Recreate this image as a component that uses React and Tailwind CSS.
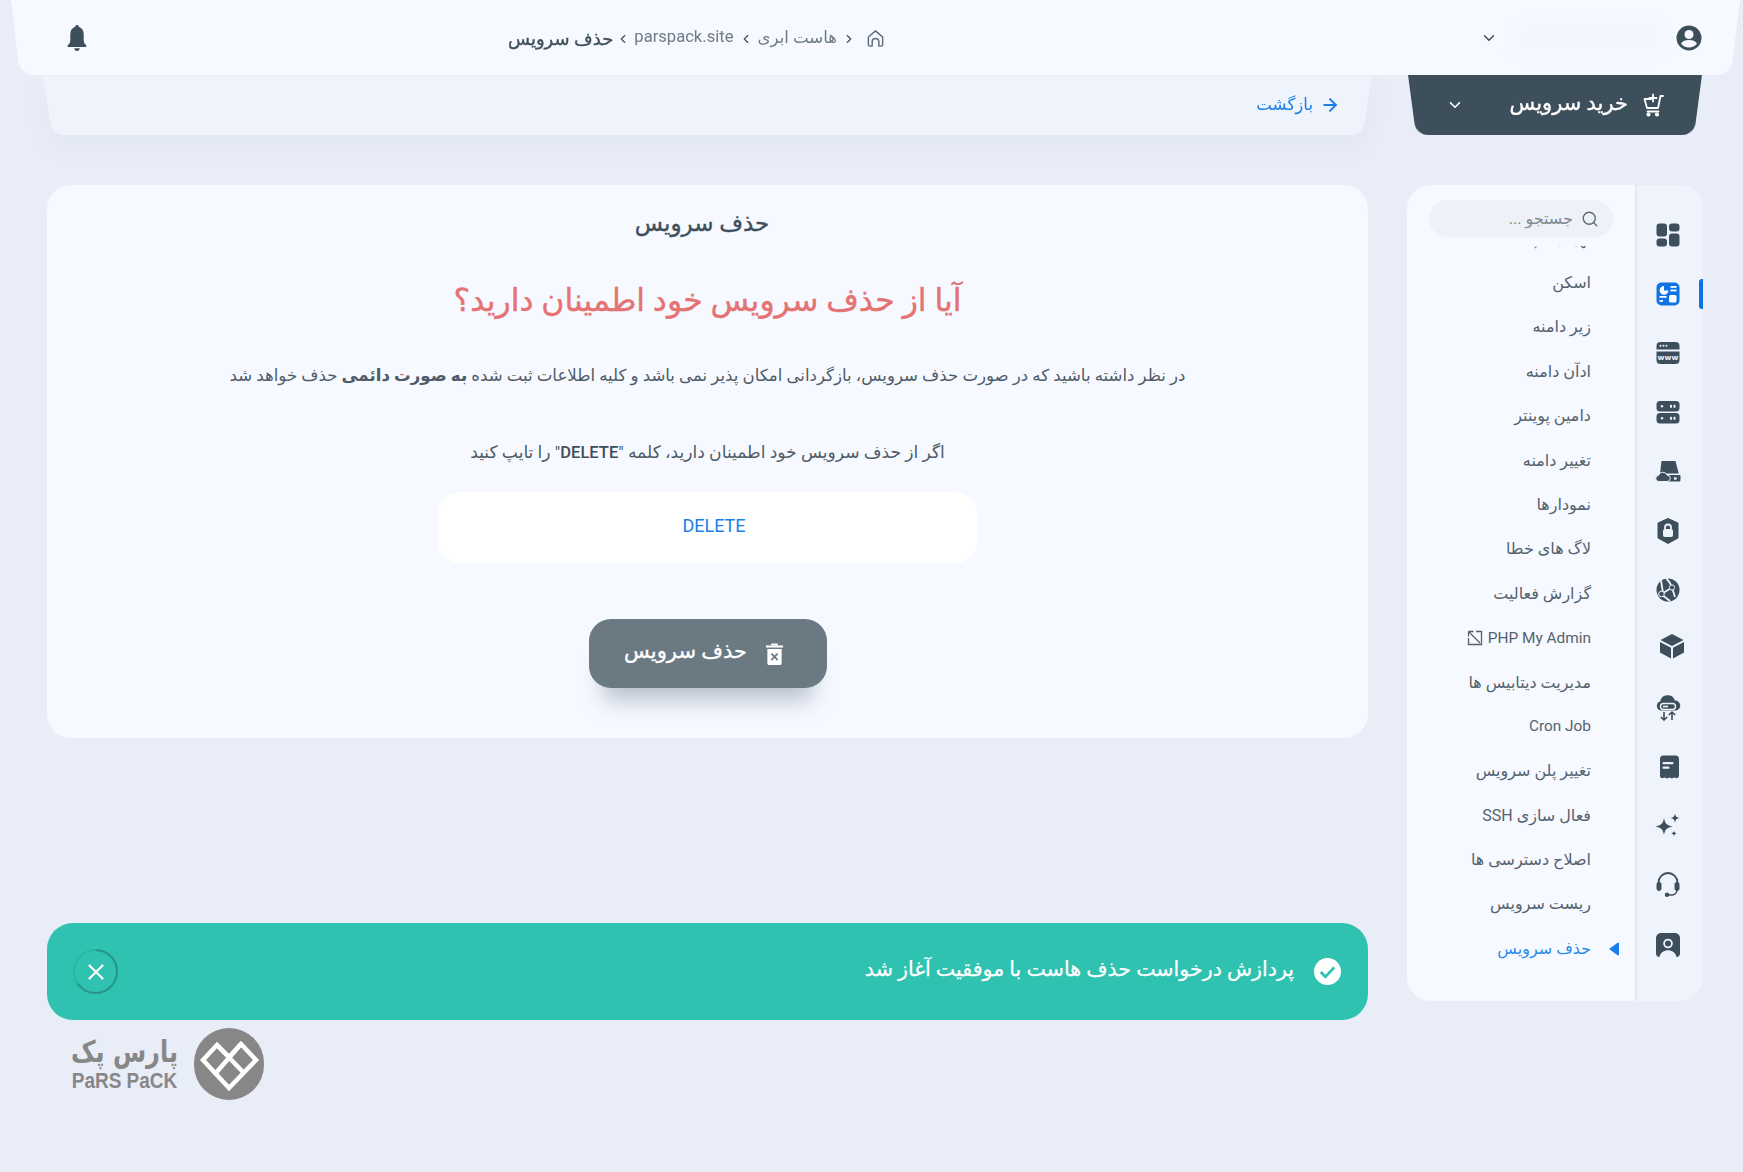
import React from "react";
import { ChevronDown, ChevronLeft, ChevronRight, Search, ArrowRight, X } from "lucide-react";

const DARK = "#3e4f5c";

const Svg = ({ children, className = "w-[26px] h-[26px]" }) => (
  <svg viewBox="0 0 26 26" className={className} fill={DARK}>{children}</svg>
);

const icons = [
  <Svg key="a">
    <rect x="1.5" y="1.5" width="10.5" height="13" rx="3" />
    <rect x="14" y="1.5" width="10.5" height="8" rx="3" />
    <rect x="1.5" y="16.5" width="10.5" height="8" rx="3" />
    <rect x="14" y="11.5" width="10.5" height="13" rx="3" />
  </Svg>,
  <Svg key="b">
    <rect x="1.5" y="1.5" width="23" height="23" rx="5" fill="#0f72e5" />
    <path d="M9 5a4.4 4.4 0 1 0 4.4 4.4H9z" fill="#fff" />
    <rect x="15.5" y="5" width="6" height="1.8" fill="#fff" />
    <rect x="15.5" y="8.6" width="6" height="1.8" fill="#fff" />
    <rect x="4.5" y="15" width="7" height="1.8" fill="#fff" />
    <rect x="4.5" y="19" width="3.5" height="1.8" fill="#fff" />
    <rect x="14" y="14" width="7.5" height="7.5" rx="1.5" fill="#fff" />
  </Svg>,
  <Svg key="c">
    <path d="M1.5 9.5V6a4 4 0 0 1 4-4h15a4 4 0 0 1 4 4v3.5z" />
    <path d="M1.5 11.5h23V20a4 4 0 0 1-4 4h-15a4 4 0 0 1-4-4z" />
    <g fill="#eef2fb"><circle cx="5.5" cy="5.8" r="1" /><circle cx="8.5" cy="5.8" r="1" /><circle cx="11.5" cy="5.8" r="1" /></g>
    <text x="13" y="20" textAnchor="middle" fontSize="7.5" fontWeight="700" fill="#eef2fb" fontFamily="'DejaVu Sans', sans-serif">www</text>
  </Svg>,
  <Svg key="d">
    <rect x="1.5" y="2" width="23" height="10.5" rx="3.5" />
    <rect x="1.5" y="14" width="23" height="10.5" rx="3.5" />
    <g fill="#eef2fb">
      <circle cx="7" cy="7.2" r="1.2" /><rect x="15" y="5.8" width="2" height="3" rx=".6" /><rect x="18.5" y="5.8" width="2" height="3" rx=".6" />
      <circle cx="7" cy="19.2" r="1.2" /><rect x="15" y="17.8" width="2" height="3" rx=".6" /><rect x="18.5" y="17.8" width="2" height="3" rx=".6" />
    </g>
  </Svg>,
  <Svg key="e">
    <path d="M6.5 3h14l3.2 12.5H5z" />
    <path d="M9 17h15.5a1 1 0 0 1 1 1v4a1.5 1.5 0 0 1-1.5 1.5H13.5V19z" />
    <path d="M4 23.5a3 3 0 0 1-.5-6 4.5 4.5 0 0 1 8.5-.5 3.2 3.2 0 0 1 0 6.5z" stroke="#eef2fb" strokeWidth="1" />
    <rect x="19" y="19.3" width="2.6" height="2.4" fill="#eef2fb" />
  </Svg>,
  <Svg key="f">
    <path d="M13 .5 23 5v15L13 25.5 3 20V5z" stroke={DARK} strokeWidth="1" strokeLinejoin="round" />
    <rect x="8" y="11" width="10" height="8" rx="2" fill="#eef2fb" />
    <path d="M10 11.500V9.500a3 3 0 0 1 6 0v2" fill="none" stroke="#eef2fb" strokeWidth="1.800" />
  </Svg>,
  <Svg key="g">
    <circle cx="13" cy="13" r="11.5" />
    <g stroke="#eef2fb" strokeWidth="1.800" fill="none">
      <path d="M6.500 17 17 10.500 20 20" /><path d="M6 3.500 8 16" /><path d="M6.500 17.500 15 24" /><path d="M11 1c3 3 5 6 6 9.500" />
    </g>
    <circle cx="6.500" cy="17" r="2.800" stroke="#eef2fb" strokeWidth="1" />
    <circle cx="17" cy="10.500" r="2.600" stroke="#eef2fb" strokeWidth="1" />
  </Svg>,
  <Svg key="h" className="w-[26px] h-[26px] translate-x-[4px] -translate-y-[3px]">
    <path d="M13 1 24.500 7 13 13 1.500 7z" />
    <path d="M1 9 12 14.700V25.500L1 19.500z" />
    <path d="M25 9 14 14.700V25.500L25 19.500z" />
  </Svg>,
  <Svg key="i">
    <path d="M6 15.500a4.600 4.600 0 0 1-.8-9 7.500 7.500 0 0 1 14.600-1 4.900 4.900 0 0 1 .9 10z" />
    <rect x="5.500" y="8.500" width="15" height="6" rx="3" fill={DARK} stroke="#eef2fb" strokeWidth="1.400" />
    <rect x="8" y="10.700" width="5" height="1.600" fill="#eef2fb" />
    <g fill="none" stroke={DARK} strokeWidth="1.600"><path d="M9 17v8M5.800 22l3.200 3 3.200-3" /><path d="M17 25v-8M13.800 20l3.200-3 3.200 3" /></g>
  </Svg>,
  <Svg key="j">
    <path d="M5.500 1.500h15a3.500 3.500 0 0 1 3.500 3.500v16.500c0 2-1.500 3-3 2.600l-2-.6-2 1-2.500-1-2.500 1-2-1-2 .6c-1.500.4-3-.6-3-2.600V5a3.500 3.500 0 0 1 3.500-3.500z" />
    <rect x="7.500" y="8" width="11" height="2.200" rx="1" fill="#eef2fb" />
    <rect x="7.500" y="12.500" width="7" height="2.200" rx="1" fill="#eef2fb" />
  </Svg>,
  <Svg key="k">
    <path d="M9 5c1 5.600 2.900 7.500 8.500 8.500C11.900 14.500 10 16.400 9 22c-1-5.600-2.900-7.500-8.500-8.500C6.100 12.500 8 10.600 9 5z" />
    <path d="M20 .500c.5 3 1.600 4.100 4.600 4.600-3 .5-4.100 1.600-4.600 4.600-.5-3-1.600-4.100-4.600-4.600 3-.5 4.100-1.600 4.600-4.600z" />
    <path d="M19 17.500c.3 1.900 1 2.600 2.900 2.900-1.900.3-2.600 1-2.900 2.900-.3-1.900-1-2.600-2.900-2.900 1.900-.3 2.600-1 2.900-2.900z" />
  </Svg>,
  <Svg key="l" className="w-[26px] h-[26px] -translate-y-[2px]">
    <path d="M3.500 14v-2.500a9.500 9.500 0 0 1 19 0V14" fill="none" stroke={DARK} strokeWidth="1.800" />
    <rect x="1.500" y="11" width="5" height="9" rx="2.400" />
    <rect x="19.500" y="11" width="5" height="9" rx="2.400" />
    <path d="M22 19c0 3-2.500 5-6 5h-2.500" fill="none" stroke={DARK} strokeWidth="1.500" />
    <circle cx="12" cy="23.800" r="2.200" />
  </Svg>,
  <Svg key="m">
    <path d="M6 1h14a5 5 0 0 1 5 5v15.500c0 2.500-1.800 3.500-3.500 3.500-.8-4-4-6.500-8.500-6.500S5.300 21 4.500 25C2.800 25 1 24 1 21.500V6a5 5 0 0 1 5-5z" />
    <circle cx="13" cy="11.500" r="4.800" fill="#eef2fb" />
    <path d="M5 25.500c.8-4.500 3.800-7 8-7s7.200 2.500 8 7z" fill="#eef2fb" />
    <path d="M13 8.500a3 3 0 1 0 0 6 3 3 0 0 0 0-6z" fill={DARK} />
  </Svg>,
];

const items = [
  "تهیه بکاپ", "اسکن", "زیر دامنه", "ادآن دامنه", "دامین پوینتر", "تغییر دامنه", "نمودارها", "لاگ های خطا", "گزارش فعالیت",
  "PHP My Admin", "مدیریت دیتابیس ها", "Cron Job", "تغییر پلن سرویس", "فعال سازی SSH", "اصلاح دسترسی ها", "ریست سرویس", "حذف سرویس",
];

const Logo = () => (
  <div dir="ltr" className="flex items-center pl-[25px] mt-[8px] gap-[17px]">
    <div className="w-[105px] flex flex-col items-center text-[#878787] font-['Liberation_Sans','DejaVu_Sans',sans-serif]">
      <span dir="rtl" className="text-[24px] leading-[30px] font-bold font-['DejaVu_Sans',sans-serif] whitespace-nowrap scale-y-[1.25]">پارس پک</span>
      <span className="text-[19px] leading-[22px] font-bold whitespace-nowrap mt-[3px] scale-y-[1.2]">PaRS PaCK</span>
    </div>
    <div className="w-[70px] h-[72px] rounded-full bg-[#878787] flex items-center justify-center">
      <svg viewBox="0 0 70 70" className="w-[70px] h-[70px]" fill="none" stroke="#fff" strokeWidth="4.500">
        <path d="M9 31 23 16 35 28 47 15 62 31 35 59z" />
        <path d="M23 16 49 43" />
        <path d="M47 15 21 45" />
      </svg>
    </div>
  </div>
);

export default function App() {
  return (
    <div dir="rtl" className="h-[1172px] overflow-hidden bg-[#e9edf8] text-[#4a5966] font-['Roboto','DejaVu_Sans',sans-serif]">
      <header className="relative z-20 h-[75px] ml-[20px] mr-[12px] flex items-center before:absolute before:inset-0 before:rounded-b-[14px] before:bg-[#f6f9ff] before:origin-bottom before:[transform:perspective(1000px)_rotateX(-8deg)]">
        <div className="relative flex items-center w-full pr-[29px] pl-[44px]">
          <svg viewBox="0 0 26 26" className="w-[26px] h-[26px] shrink-0">
            <circle cx="13" cy="13" r="12.500" fill={DARK} />
            <circle cx="13" cy="9.500" r="4.500" fill="#f6f9ff" />
            <path d="M5 18.500c1.500-2.500 4.500-3.500 8-3.500s6.500 1 8 3.500c-1.800 2.400-4.800 4-8 4s-6.200-1.600-8-4z" fill="#f6f9ff" />
          </svg>
          <div className="w-[140px] h-[20px] mr-[16px] ml-[22px] bg-[#f1f4fb] rounded-full blur-[8px]" />
          <ChevronDown className="w-[18px] h-[18px] shrink-0" color={DARK} strokeWidth={2} />
          <nav className="flex items-center mr-[595px] text-[16.600px] text-[#6f7c87]">
            <svg viewBox="0 0 20 20" className="w-[19px] h-[19px] shrink-0 mt-[2px]" fill="none" stroke="#5b6b78" strokeWidth="1.500" strokeLinejoin="round">
              <path d="M2.500 8.500 10 2l7.500 6.500v8a1.500 1.500 0 0 1-1.500 1.500h-2.500v-4.500a3.500 3.500 0 0 0-7 0V18H4a1.500 1.500 0 0 1-1.500-1.500z" />
            </svg>
            <ChevronRight className="w-[14px] h-[14px] mr-[10px] mt-[2px]" color={DARK} strokeWidth={2} />
            <span className="mr-[5px] whitespace-nowrap mt-[2px]">هاست ابری</span>
            <ChevronLeft className="w-[14px] h-[14px] mr-[5px] mt-[2px]" color={DARK} strokeWidth={2} />
            <span className="mr-[5px] whitespace-nowrap">parspack.site</span>
            <ChevronLeft className="w-[14px] h-[14px] mr-[4px] mt-[2px]" color={DARK} strokeWidth={2} />
            <span className="mr-[3px] whitespace-nowrap text-[18px] [-webkit-text-stroke:0.35px] text-[#3e4f5c] mt-[2px]">حذف سرویس</span>
          </nav>
          <svg viewBox="0 0 24 24" className="w-[26px] h-[26px] mr-auto shrink-0" fill={DARK}>
            <path d="M12 0c.9 0 1.500.6 1.600 1.600 3 1 4.600 3.600 4.600 7.200v5c0 2.400.8 3.400 2.400 5v1.400H3.400v-1.400c1.600-1.600 2.400-2.600 2.400-5v-5c0-3.600 1.600-6.200 4.600-7.200C10.500.6 11.100 0 12 0z" />
            <path d="M9.500 21.500h5c0 1.500-1.100 2.500-2.500 2.500s-2.500-1-2.500-2.500z" />
          </svg>
        </div>
      </header>

      <div className="grid grid-cols-[296px_1fr] gap-x-[39px] pr-[40px] pl-[47px]">
        <div className="relative h-[60px] mx-[9px] flex items-center justify-between pr-[30px] pl-[30px] text-white before:absolute before:inset-0 before:rounded-b-[12px] before:bg-[#3e4f5c] before:origin-bottom before:[transform:perspective(300px)_rotateX(-16deg)]">
          <div className="relative flex items-center gap-[12px]">
            <svg viewBox="0 0 24 24" className="w-[24px] h-[24px]" fill="none" stroke="#fff" strokeWidth="1.800" strokeLinecap="round" strokeLinejoin="round">
              <path d="M23 3h-2.500L18 15H7L4.500 6H11" />
              <path d="M7.500 18.500h11" />
              <circle cx="8.500" cy="21.500" r="1.200" fill="#fff" />
              <circle cx="17" cy="21.500" r="1.200" fill="#fff" />
              <path d="M13 1.500v7M9.500 5h7" />
            </svg>
            <span className="text-[21px] [-webkit-text-stroke:0.35px] whitespace-nowrap -mt-[3px]">خرید سرویس</span>
          </div>
          <ChevronDown className="relative w-[18px] h-[18px]" color="#fff" strokeWidth={2.200} />
        </div>

        <div className="relative h-[60px] mx-[5px] flex items-center pr-[23px] before:absolute before:inset-0 before:rounded-b-[12px] before:bg-[#eff3fb] before:shadow-[0_12px_24px_rgba(120,135,170,0.07)] before:origin-bottom before:[transform:perspective(1000px)_rotateX(-13deg)]">
          <a className="relative flex items-center gap-[7px] text-[#1a7fe8] text-[16.600px]">
            <ArrowRight className="w-[20px] h-[20px]" strokeWidth={2.400} />
            <span className="whitespace-nowrap">بازگشت</span>
          </a>
        </div>

        <aside className="relative mt-[50px] h-[816px] rounded-[24px] overflow-hidden bg-[#f6f9ff] flex">
          <div className="w-[228px] flex flex-col">
            <div className="mt-[15px] mx-[22px] h-[37px] rounded-full bg-[#eef1f7] flex items-center pr-[14px] gap-[8px] text-[#7d8a95] text-[16px]">
              <Search className="w-[18px] h-[18px] shrink-0" color="#5b6b78" strokeWidth={1.800} />
              <span className="whitespace-nowrap">جستجو ...</span>
            </div>
            <div className="mt-[9px] flex-1 overflow-hidden">
              <ul className="-mt-[29.600px] pr-[44px] text-[16px]">
                {items.map((t, i) => (
                  <li key={t} className={`relative h-[44.400px] flex items-center whitespace-nowrap ${i === items.length - 1 ? "text-[#2b8ae8]" : "text-[#55626e]"}`}>
                    {t === "PHP My Admin" && (
                      <span className="flex items-center gap-[5px] text-[15.400px]">
                        {t}
                        <svg viewBox="0 0 16 16" className="w-[16px] h-[16px]" fill="none" stroke="#55626e" strokeWidth="1.300">
                          <path d="M9 1.500h5.500v13h-13V8" />
                          <path d="M1.500 1.500h5M1.500 1.500v5M1.500 1.500 13 13" />
                        </svg>
                      </span>
                    )}
                    {t === "Cron Job" && <span className="text-[15.400px]">{t}</span>}
                    {t !== "PHP My Admin" && t !== "Cron Job" && t}
                    {i === items.length - 1 && (
                      <svg viewBox="0 0 10 14" className="absolute right-[-28px] w-[10px] h-[14px]" fill="#1a7fe8">
                        <path d="M9 .5a1 1 0 0 1 1 1v11a1 1 0 0 1-1 1L1 7.800a1 1 0 0 1 0-1.600z" />
                      </svg>
                    )}
                  </li>
                ))}
              </ul>
            </div>
          </div>
          <div className="flex-1 order-first bg-[#eff3fb] border-l-2 border-[#e3e8f2] flex flex-col items-center pt-[20px] pr-[5px]">
            {icons.map((ic, i) => (
              <div key={i} className="h-[59.200px] w-full flex items-center justify-center shrink-0">{ic}</div>
            ))}
          </div>
          <div className="absolute right-0 top-[94px] w-[4px] h-[30px] rounded-l-[3px] bg-[#0f72e5]" />
        </aside>

        <main className="mt-[50px] min-w-0">
          <section className="bg-[#f6f9ff] rounded-[24px] flex flex-col items-center pt-[24px] pb-[50px]">
            <h2 className="pr-[11px] text-[23px] leading-[30px] [-webkit-text-stroke:0.35px] text-[#3e4f5c] font-normal">حذف سرویس</h2>
            <h1 className="mt-[42px] text-[31.500px] leading-[40px] [-webkit-text-stroke:0.4px] text-[#e57373] font-normal whitespace-nowrap">آیا از حذف سرویس خود اطمینان دارید؟</h1>
            <p className="mt-[43px] text-[16.600px] leading-[24px] text-[#4f5c68] whitespace-nowrap">
              در نظر داشته باشید که در صورت حذف سرویس، بازگردانی امکان پذیر نمی باشد و کلیه اطلاعات ثبت شده <b>به صورت دائمی</b> حذف خواهد شد
            </p>
            <p className="mt-[52px] text-[17.100px] leading-[24px] text-[#4f5c68] whitespace-nowrap">
              اگر از حذف سرویس خود اطمینان دارید، کلمه "<span className="font-medium text-[#3e4f5c] text-[16.500px]">DELETE</span>" را تایپ کنید
            </p>
            <input readOnly value="DELETE" dir="ltr" className="mt-[27px] w-[539px] h-[71px] rounded-[22px] bg-white text-center pl-[13px] pb-[4px] text-[18px] text-[#1a7fe8] outline-none" />
            <button className="mt-[56px] w-[238px] h-[69px] rounded-[22px] bg-[#6b7983] text-white flex items-center justify-center gap-[18px] pr-[7px] shadow-[0_26px_22px_-14px_rgba(90,105,130,0.4)]">
              <svg viewBox="0 0 20 24" className="w-[19px] h-[24px]" fill="#fff">
                <rect x="1" y="3" width="18" height="2.200" />
                <rect x="6.500" y="1" width="7" height="2" />
                <path fillRule="evenodd" d="M2.500 6.800h15V22a1.500 1.500 0 0 1-1.500 1.500H4A1.500 1.500 0 0 1 2.500 22zM7.300 11 6 12.300l2.700 2.700L6 17.700 7.300 19 10 16.300l2.700 2.700 1.300-1.300L11.300 15 14 12.300 12.700 11 10 13.700z" />
              </svg>
              <span className="whitespace-nowrap text-[21px] [-webkit-text-stroke:0.35px] -mt-[3px]">حذف سرویس</span>
            </button>
          </section>

          <div className="mt-[185px] h-[97px] rounded-[26px] bg-[#2fc2b0] flex items-center justify-between pr-[27px] pl-[26px] text-white">
            <div className="flex items-center gap-[20px]">
              <svg viewBox="0 0 26 26" className="w-[27px] h-[27px] shrink-0">
                <circle cx="13" cy="13" r="13" fill="#fff" />
                <path d="M6.500 13.500 11 18l8.500-9" fill="none" stroke="#2fc2b0" strokeWidth="2.600" />
              </svg>
              <span className="text-[20.600px] [-webkit-text-stroke:0.25px] whitespace-nowrap -mt-[5px]">پردازش درخواست حذف هاست با موفقیت آغاز شد</span>
            </div>
            <div className="relative w-[45px] h-[45px] flex items-center justify-center">
              <svg viewBox="0 0 45 45" className="absolute inset-0 w-[45px] h-[45px] -rotate-90" fill="none" strokeWidth="2">
                <circle cx="22.500" cy="22.500" r="21.500" stroke="#2ab5a5" />
                <circle cx="22.500" cy="22.500" r="21.500" stroke="#2a9488" strokeDasharray="88 135" />
              </svg>
              <X className="w-[26px] h-[26px]" color="#fff" strokeWidth={2} />
            </div>
          </div>
          <Logo />
        </main>
      </div>
    </div>
  );
}
